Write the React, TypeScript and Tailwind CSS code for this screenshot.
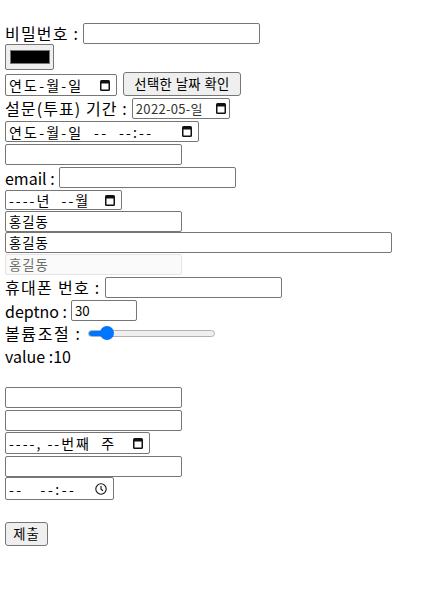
import React from "react";

const F = { fontFamily: '"Noto Sans CJK KR", "Noto Sans", sans-serif' };

function Cal() {
  return (
    <svg width="10" height="11" viewBox="0 0 10 11" className="shrink-0">
      <rect x="0" y="0" width="10" height="11" rx="1.5" fill="#111" />
      <rect x="1.5" y="3.5" width="7" height="6" fill="#fff" />
    </svg>
  );
}

function Clock() {
  return (
    <svg width="12" height="12" viewBox="0 0 12 12" className="shrink-0">
      <circle cx="6" cy="6" r="5.2" fill="none" stroke="#111" strokeWidth="1.1" />
      <path d="M6 3 V6.2 L8 7.8" fill="none" stroke="#111" strokeWidth="1.1" />
    </svg>
  );
}

function Box({
  w,
  h = 21,
  children,
  cls = "",
}: {
  w: number;
  h?: number;
  children?: React.ReactNode;
  cls?: string;
}) {
  return (
    <div
      className={`flex items-center shrink-0 border border-[#767676] rounded-[2px] px-[3px] text-[13.33px] leading-none whitespace-nowrap ${cls}`}
      style={{ width: w, height: h }}
    >
      {children}
    </div>
  );
}

export default function App() {
  return (
    <div className="w-[422px] h-[591px] bg-white text-black text-[16px] pl-[5px] pt-[22px]" style={F}>
      {/* row1 */}
      <div className="flex items-center h-[22px]">
        <span className="leading-none tracking-[1.2px]">비밀번호 :</span>
        <div className="ml-[4px]">
          <Box w={177} />
        </div>
      </div>
      {/* color */}
      <div className="flex items-start h-[27px]">
        <div className="w-[49px] h-[26px] bg-[#efefef] border border-[#767676] rounded-[2px] flex items-center justify-center">
          <div className="w-[40px] h-[14px] bg-black border border-[#777]" />
        </div>
      </div>
      {/* date + button */}
      <div className="flex items-end h-[26px] pb-[1px]">
        <Box w={112} h={22} cls="justify-between pr-[6px]">
          <span className="text-[14px] tracking-[2.2px]">연도-월-일</span>
          <Cal />
        </Box>
        <div className="ml-[6px] w-[118px] h-[24px] bg-[#efefef] border border-[#767676] rounded-[3px] flex items-center justify-center text-[13.33px] whitespace-nowrap tracking-[0.4px]">
          선택한 날짜 확인
        </div>
      </div>
      {/* 설문 기간 */}
      <div className="flex items-end h-[23px] pb-[1px]">
        <span className="leading-[21px] tracking-[1.1px]">설문(투표) 기간 :</span>
        <div className="ml-[4px]">
          <Box w={98} cls="justify-between pr-[3px]">
            <span className="text-[13px] text-[#333] tracking-[0.3px]">2022-05-일</span>
            <Cal />
          </Box>
        </div>
      </div>
      {/* datetime */}
      <div className="flex items-center h-[23px]">
        <Box w={194} cls="justify-between pr-[6px]">
          <span className="text-[14px] tracking-[2.2px]">
            연도-월-일&nbsp;&nbsp;--&nbsp;&nbsp;--:--
          </span>
          <Cal />
        </Box>
      </div>
      <div className="flex items-center h-[23px]">
        <Box w={177} />
      </div>
      {/* email */}
      <div className="flex items-center h-[23px]">
        <span className="leading-none">email :</span>
        <div className="ml-[4px]">
          <Box w={177} />
        </div>
      </div>
      {/* month */}
      <div className="flex items-center h-[22px]">
        <Box w={117} h={20} cls="justify-between pr-[6px]">
          <span className="text-[14px] tracking-[2px]">----년&nbsp;&nbsp;--월</span>
          <Cal />
        </Box>
      </div>
      <div className="flex items-center h-[21px]">
        <Box w={177}>
          <span className="text-[13.33px] tracking-[1px]">홍길동</span>
        </Box>
      </div>
      <div className="flex items-center h-[21px]">
        <Box w={387}>
          <span className="text-[13.33px] tracking-[1px]">홍길동</span>
        </Box>
      </div>
      <div className="flex items-end h-[22px]">
        <Box w={177} cls="bg-[#fafafa] border-[#e4e4e4] text-[#6d6d6d]">
          <span className="text-[13.33px] tracking-[1px]">홍길동</span>
        </Box>
      </div>
      {/* phone */}
      <div className="flex items-center h-[24px]">
        <span className="leading-none tracking-[1.3px]">휴대폰 번호 :</span>
        <div className="ml-[4px]">
          <Box w={177} />
        </div>
      </div>
      {/* deptno */}
      <div className="flex items-center h-[23px]">
        <span className="leading-none">deptno :</span>
        <div className="ml-[4px]">
          <Box w={66}>
            <span className="text-[13.33px]">30</span>
          </Box>
        </div>
      </div>
      {/* slider */}
      <div className="flex items-center h-[22px]">
        <span className="leading-none tracking-[1.6px]">볼륨조절 :</span>
        <div className="ml-[6px] relative w-[127px] h-[14px] flex items-center">
          <div className="w-full h-[7px] rounded-full bg-[#efefef] border border-[#b2b2b2] overflow-hidden">
            <div className="h-full w-[19px] bg-[#0075ff]" />
          </div>
          <div className="absolute left-[12px] top-[0px] w-[14px] h-[14px] rounded-full bg-[#0075ff]" />
        </div>
      </div>
      {/* value */}
      <div className="flex items-center h-[23px]">
        <span className="leading-none">value :10</span>
      </div>
      <div className="h-[20px]" />
      <div className="flex items-start h-[22px]">
        <Box w={177} />
      </div>
      <div className="flex items-center h-[23px]">
        <Box w={177} />
      </div>
      {/* week */}
      <div className="flex items-start h-[23px]">
        <Box w={145} h={22} cls="justify-between pr-[6px]">
          <span className="text-[14px] tracking-[2px]">----,&nbsp;--번째&nbsp;&nbsp;주</span>
          <Cal />
        </Box>
      </div>
      <div className="flex items-center h-[22px]">
        <Box w={177} />
      </div>
      {/* time */}
      <div className="flex items-start h-[23px]">
        <Box w={109} h={23} cls="justify-between pr-[6px]">
          <span className="text-[14px] tracking-[2.5px]">--&nbsp;&nbsp;&nbsp;--:--</span>
          <Clock />
        </Box>
      </div>
      <div className="h-[22px]" />
      <div className="w-[43px] h-[24px] bg-[#efefef] border border-[#767676] rounded-[3px] flex items-center justify-center text-[13.33px] tracking-[1px]">
        제출
      </div>
    </div>
  );
}
